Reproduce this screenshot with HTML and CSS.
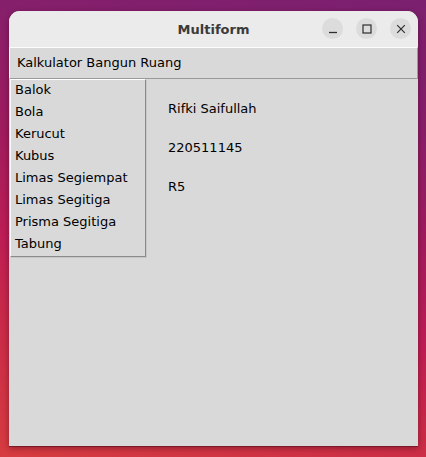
FILE: index.html
```html
<!DOCTYPE html>
<html>
<head>
<meta charset="utf-8">
<title>Multiform</title>
<link rel="stylesheet" href="styles.css">
</head>
<body>
<div class="window">
  <div class="titlebar">
    <span class="title">Multiform</span>
    <div class="controls">
      <span class="ctl"><svg width="10" height="10" viewBox="0 0 10 10"><path d="M1 8.5h8" stroke="#2e2e2e" stroke-width="1.3"/></svg></span>
      <span class="ctl"><svg width="10" height="10" viewBox="0 0 10 10"><rect x="1" y="1" width="8" height="8" fill="none" stroke="#2e2e2e" stroke-width="1.2"/></svg></span>
      <span class="ctl"><svg width="10" height="10" viewBox="0 0 10 10"><path d="M1.2 1.2l7.6 7.6M8.8 1.2l-7.6 7.6" stroke="#2e2e2e" stroke-width="1.2"/></svg></span>
    </div>
  </div>
  <div class="menubar"><span class="menu-item">Kalkulator Bangun Ruang</span></div>
  <div class="content">
    <div class="labels">
      <div class="label">Rifki Saifullah</div>
      <div class="label">220511145</div>
      <div class="label">R5</div>
    </div>
  </div>
  <ul class="popup">
    <li>Balok</li>
    <li>Bola</li>
    <li>Kerucut</li>
    <li>Kubus</li>
    <li>Limas Segiempat</li>
    <li>Limas Segitiga</li>
    <li>Prisma Segitiga</li>
    <li>Tabung</li>
  </ul>
</div>
</body>
</html>
```

FILE: styles.css
```css
html, body {
  margin: 0;
  padding: 0;
  width: 426px;
  height: 457px;
  overflow: hidden;
}
body {
  background: linear-gradient(194deg, #7a206f 0%, #861f6b 20%, #a01b5e 42%, #bc1d55 60%, #c92a48 76%, #d63c40 100%);
  font-family: "DejaVu Sans", sans-serif;
  font-size: 13px;
  color: #000;
  padding-top: 11px;
  box-sizing: border-box;
}
.window {
  position: relative;
  margin-left: 9px;
  width: 409px;
  height: 435px;
  background: #d9d9d9;
  border-radius: 11px 11px 0 0;
  box-shadow: 0 1px 0 #7a1a28, 0 2px 6px rgba(60, 0, 20, 0.45);
  display: flex;
  flex-direction: column;
}
.titlebar {
  height: 36px;
  background: #ebebeb;
  border-radius: 11px 11px 0 0;
  position: relative;
  display: flex;
  align-items: center;
  justify-content: center;
  flex-shrink: 0;
}
.title {
  font-weight: bold;
  font-size: 13px;
  color: #3a3a3a;
  padding-top: 1px;
}
.controls {
  position: absolute;
  right: 7px;
  top: 7px;
  display: flex;
  gap: 13px;
}
.ctl {
  width: 21px;
  height: 21px;
  border-radius: 50%;
  background: #dcdcdc;
  display: flex;
  align-items: center;
  justify-content: center;
}
.menubar {
  height: 30px;
  border-top: 1px solid #fdfdfd;
  border-left: 1px solid #fdfdfd;
  border-bottom: 1px solid #9a9a9a;
  border-right: 1px solid #9a9a9a;
  background: #d9d9d9;
  line-height: 30px;
  padding-left: 7px;
  flex-shrink: 0;
}
.content {
  flex: 1;
}
.labels {
  padding-top: 10px;
  padding-left: 159px;
}
.label {
  line-height: 39px;
}
.popup {
  position: absolute;
  left: 1px;
  top: 68px;
  width: 130px;
  margin: 0;
  padding: 0 0 0 4px;
  list-style: none;
  background: #d9d9d9;
  border-top: 1px solid #ffffff;
  border-left: 1px solid #ffffff;
  border-right: 1px solid #8a8a8a;
  border-bottom: 1px solid #8a8a8a;
  box-shadow: 1px 1px 0 rgba(0,0,0,0.08);
}
.popup li {
  line-height: 19px;
  padding-bottom: 3px;
}
```
